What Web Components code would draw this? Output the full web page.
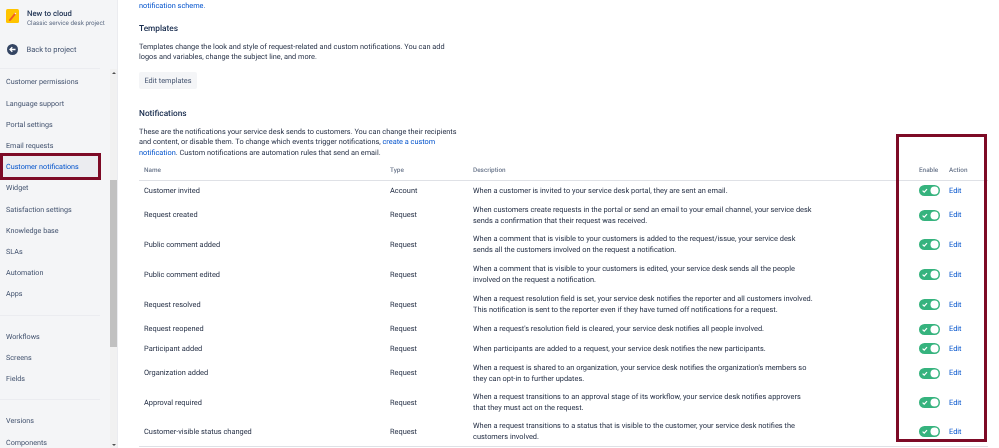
<!DOCTYPE html>
<html><head><meta charset="utf-8"><style>
html,body{margin:0;height:448px;overflow:hidden;background:#fff}
body{font:7.35px/10.6px Roboto,"Noto Sans",sans-serif;color:#1f2a40;text-rendering:geometricPrecision}
</style></head><body>
<app-shell>
  <side-nav slot="side">
    <nav-item>Customer permissions</nav-item>
    <nav-item>Language support</nav-item>
    <nav-item>Portal settings</nav-item>
    <nav-item>Email requests</nav-item>
    <nav-item active>Customer notifications</nav-item>
    <nav-item>Widget</nav-item>
    <nav-item>Satisfaction settings</nav-item>
    <nav-item>Knowledge base</nav-item>
    <nav-item>SLAs</nav-item>
    <nav-item>Automation</nav-item>
    <nav-item>Apps</nav-item>
    <nav-rule></nav-rule>
    <nav-item>Workflows</nav-item>
    <nav-item>Screens</nav-item>
    <nav-item>Fields</nav-item>
    <nav-rule></nav-rule>
    <nav-item>Versions</nav-item>
    <nav-item>Components</nav-item>
  </side-nav>
  <notif-page>
    <notif-row name="Customer invited" type="Account" h="20">When a customer is invited to your service desk portal, they are sent an email.</notif-row>
    <notif-row name="Request created" type="Request" h="29">When customers create requests in the portal or send an email to your email channel, your service desk<br>sends a confirmation that their request was received.</notif-row>
    <notif-row name="Public comment added" type="Request" h="30">When a comment that is visible to your customers is added to the request/issue, your service desk<br>sends all the customers involved on the request a notification.</notif-row>
    <notif-row name="Public comment edited" type="Request" h="30">When a comment that is visible to your customers is edited, your service desk sends all the people<br>involved on the request a notification.</notif-row>
    <notif-row name="Request resolved" type="Request" h="30">When a request resolution field is set, your service desk notifies the reporter and all customers involved.<br>This notification is sent to the reporter even if they have turned off notifications for a request.</notif-row>
    <notif-row name="Request reopened" type="Request" h="19">When a request's resolution field is cleared, your service desk notifies all people involved.</notif-row>
    <notif-row name="Participant added" type="Request" h="20">When participants are added to a request, your service desk notifies the new participants.</notif-row>
    <notif-row name="Organization added" type="Request" h="29">When a request is shared to an organization, your service desk notifies the organization's members so<br>they can opt-in to further updates.</notif-row>
    <notif-row name="Approval required" type="Request" h="30">When a request transitions to an approval stage of its workflow, your service desk notifies approvers<br>that they must act on the request.</notif-row>
    <notif-row name="Customer-visible status changed" type="Request" h="28">When a request transitions to a status that is visible to the customer, your service desk notifies the<br>customers involved.</notif-row>
  </notif-page>
</app-shell>
<script>
const def=(n,html)=>{customElements.define(n,class extends HTMLElement{
  constructor(){super();this.attachShadow({mode:'open'});if(typeof html!=='function')this.shadowRoot.innerHTML=html}
  connectedCallback(){ if(typeof html==='function') this.shadowRoot.innerHTML=html(this) }
})};
def('app-shell',`<style>:host{display:block;position:relative;height:448px;overflow:hidden;filter:blur(.3px)}
.w{display:flex;height:448px}
.b{position:absolute;border:3px solid #7d0a26;box-sizing:border-box;pointer-events:none}
.b1{left:0;top:153px;width:101px;height:27px}
.b2{left:896px;top:134px;width:91px;height:308px}
</style><div class="w"><slot name="side"></slot><slot></slot></div><div class="b b1"></div><div class="b b2"></div>`);
def('side-nav',`<style>:host{display:block;width:118px;flex:none;height:448px;background:#f4f5f7;position:relative;overflow:hidden;border-right:1px solid #ebecf0;box-sizing:border-box}
.head{display:flex;gap:8px;padding:9px 0 0 6px;height:24px}
.t{font-weight:500;font-size:7.7px;line-height:9px;color:#253858;white-space:nowrap}
.s{font-size:6.3px;line-height:8px;color:#5e6c84;white-space:nowrap;margin-top:.5px}
.back{display:flex;align-items:center;gap:9px;padding:0 0 0 6.5px;height:16px;margin-top:8px;color:#42526e;white-space:nowrap;font-size:7.5px}
.back span{padding-top:2.5px}
.rule{height:1px;background:#ebecf0;width:100px;margin-top:11px}
.list{padding-top:2.4px;width:110px}
.bar{position:absolute;right:0;top:69px;bottom:0;width:7px;background:#f1f1f1}
.thumb{position:absolute;left:0;right:0;top:111px;height:167px;background:#c1c1c1}
.up,.dn{position:absolute;left:1.5px;width:0;height:0;border:2px solid transparent}
.up{top:1px;border-bottom:2.5px solid #505050}.dn{bottom:0;border-top:2.5px solid #505050}
</style>
<div class="head"><svg width="13" height="14" viewBox="0 0 13 14"><rect width="13" height="14" rx="1.5" fill="#ffc400"/><path d="M3.2 10.6 9 3.6l1.4 1.2L4.6 11.8 2.9 12z" fill="#f05a28"/><path d="M8.4 4.3 9 3.6l1.4 1.2-.6.7z" fill="#fff"/></svg>
<div><div class="t">New to cloud</div><div class="s">Classic service desk project</div></div></div>
<div class="back"><svg width="11" height="11" viewBox="0 0 11 11"><circle cx="5.5" cy="5.5" r="5.5" fill="#344563"/><path d="M8.5 5.5H3.2M5.3 3.2 3 5.5l2.3 2.3" fill="none" stroke="#fff" stroke-width="1.3"/></svg><span>Back to project</span></div>
<div class="rule"></div>
<div class="list"><slot></slot></div>
<div class="bar"><div class="up"></div><div class="thumb"></div><div class="dn"></div></div>`);
def('nav-item',e=>`<style>:host{display:block;height:21.2px;line-height:22.4px;padding-left:6px;white-space:nowrap;font-size:7.2px;color:#42526e;box-sizing:border-box}
:host([active]){background:#ebecf0;color:#0052cc;width:100px}</style><slot></slot>`);
def('nav-rule',`<style>:host{display:block;height:1px;width:100px;background:#ebecf0;margin:10.1px 0 10.1px}</style>`);
def('edit-link',`<style>:host{color:#0052cc}</style><slot></slot>`);
def('toggle-switch',`<style>:host{display:inline-block;width:21px;height:11px;line-height:0}</style>
<svg width="21" height="11" viewBox="0 0 21 11"><rect width="21" height="11" rx="5.5" fill="#36b37e"/><circle cx="15.5" cy="5.5" r="4" fill="#fff"/><path d="M3.6 5.6l1.6 1.6 2.8-3" fill="none" stroke="#fff" stroke-width="1.2"/></svg>`);
def('notif-row',e=>`<style>:host{display:grid;grid-template-columns:246px 83px 446px 30px 1fr;height:${e.getAttribute('h')}px;align-items:center;padding-left:5px;box-sizing:border-box;width:849px;font-size:7.42px}
.t{padding-top:1px}.d{white-space:nowrap;padding-top:1px}.a{display:flex;align-items:center}</style>
<div class="t">${e.getAttribute('name')}</div><div class="t">${e.getAttribute('type')}</div><div class="d"><slot></slot></div><div class="a"><toggle-switch></toggle-switch></div><div class="t"><edit-link>Edit</edit-link></div>`);
def('notif-page',`<style>:host{display:block;flex:1;padding-left:21px;min-width:0}
a{color:#0052cc;text-decoration:none}
h3{margin:0;font-size:8.3px;font-weight:500;line-height:12px;color:#172b4d}
p{margin:0;white-space:nowrap}
.top{padding-top:1px}
.btn{display:inline-block;box-sizing:border-box;background:#f4f5f7;color:#42526e;border-radius:2px;height:17px;line-height:17px;width:58px;text-align:center;white-space:nowrap;font-size:7.35px}
.hd{display:grid;grid-template-columns:246px 83px 446px 30px 1fr;padding:0 0 3px 5px;width:849px;box-sizing:border-box;height:17px;align-items:center;font-size:6.4px;color:#6b778c;font-weight:500;border-bottom:1px solid #dfe1e6;margin-top:5px}
.rows{width:849px;border-bottom:1px solid #dfe1e6}
</style>
<div class="top"><a>notification scheme.</a></div>
<h3 style="margin-top:11px">Templates</h3>
<p style="margin-top:7px">Templates change the look and style of request-related and custom notifications. You can add<br>logos and variables, change the subject line, and more.</p>
<div style="margin-top:9px;line-height:0"><span class="btn">Edit templates</span></div>
<h3 style="margin-top:19px">Notifications</h3>
<p style="margin-top:7px">These are the notifications your service desk sends to customers. You can change their recipients<br>and content, or disable them. To change which events trigger notifications, <a>create a custom<br>notification</a>. Custom notifications are automation rules that send an email.</p>
<div class="hd"><div>Name</div><div>Type</div><div>Description</div><div>Enable</div><div>Action</div></div>
<div class="rows"><slot></slot></div>`);
</script></body></html>
